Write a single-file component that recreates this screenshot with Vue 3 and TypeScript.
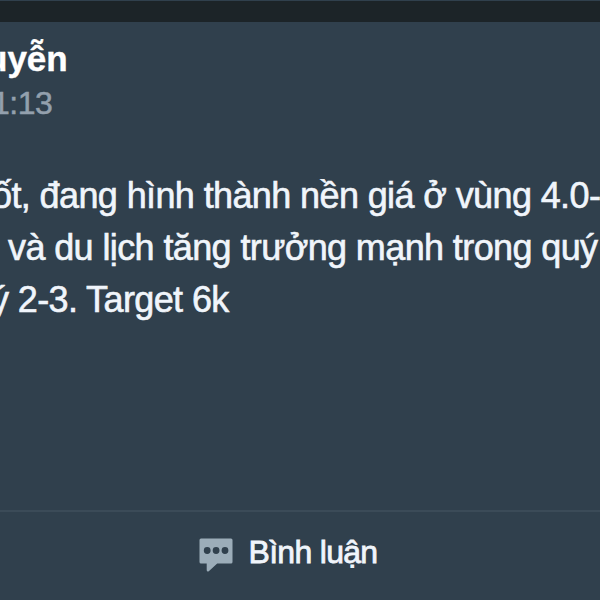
<template>
  <div class="feed">
    <article class="post">
      <header class="head">
        <div class="author">uyễn</div>
        <div class="time">1:13</div>
      </header>
      <div class="content">
        <p v-for="(line, i) in lines" :key="i" class="line" :class="`line-${i + 1}`">{{ line }}</p>
      </div>
      <footer class="actions">
        <button class="comment" type="button">
          <svg class="icon" viewBox="0 0 34 34" aria-hidden="true">
            <path
              fill-rule="evenodd"
              d="M2 .5h30a1.5 1.5 0 0 1 1.500 1.500v22a1.500 1.500 0 0 1-1.500 1.500H18.200L9.800 33.200q-1.800.9-2.100-1v-6.700H2A1.500 1.500 0 0 1 .5 24V2A1.500 1.500 0 0 1 2 .5ZM8.200 9.100a3.400 3.400 0 1 0 0 6.800 3.400 3.400 0 0 0 0-6.800Zm8.900 0a3.400 3.400 0 1 0 0 6.800 3.400 3.400 0 0 0 0-6.800Zm8.900 0a3.400 3.400 0 1 0 0 6.800 3.400 3.400 0 0 0 0-6.800Z"
            />
          </svg>
          <span class="label">Bình luận</span>
        </button>
      </footer>
    </article>
  </div>
</template>

<script setup lang="ts">
const lines: string[] = [
  'ốt, đang hình thành nền giá ở vùng 4.0-',
  'và du lịch tăng trưởng mạnh trong quý',
  'ý 2-3. Target 6k',
]
</script>

<style>
body {
  margin: 0;
  background: #30404d;
}
</style>

<style scoped>
.feed {
  width: 600px;
  height: 600px;
  box-sizing: border-box;
  overflow: hidden;
  border-top: 1px solid #30404d;
  background: #1c2428;
  font-family: 'Liberation Sans', Arial, sans-serif;
}

.post {
  display: flex;
  flex-direction: column;
  height: 578px;
  margin-top: 21px;
  background: #30404d;
}

.head {
  height: 148px;
  padding-top: 15px;
  box-sizing: border-box;
  white-space: nowrap;
}

.author {
  margin-left: -14px;
  color: #fff;
  font-size: 35px;
  font-weight: 700;
  line-height: 44px;
  -webkit-text-stroke: 0.4px #fff;
}

.time {
  margin-left: -8px;
  color: #93a0ad;
  font-size: 32px;
  line-height: 44px;
  letter-spacing: -0.5px;
  -webkit-text-stroke: 0.5px #93a0ad;
}

.content {
  flex: 1;
  color: #f0f5fb;
}

.line {
  margin: 0;
  font-size: 36px;
  line-height: 52px;
  letter-spacing: -0.61px;
  white-space: nowrap;
  -webkit-text-stroke: 0.6px #f0f5fb;
}

.line-1 {
  margin-left: -8px;
}

.line-2 {
  margin-left: 8px;
}

.line-3 {
  margin-left: -9px;
}

.actions {
  display: flex;
  justify-content: center;
  height: 90px;
  box-sizing: border-box;
  border-top: 2px solid #3b4b58;
}

.comment {
  display: flex;
  align-items: flex-start;
  gap: 16px;
  margin-right: 24px;
  padding: 26px 0 0;
  border: 0;
  background: none;
  color: #f0f5fb;
  font-family: inherit;
}

.icon {
  width: 34px;
  height: 34px;
  fill: #9cadb9;
}

.label {
  font-size: 32px;
  line-height: 36px;
  margin-top: -4px;
  letter-spacing: -0.7px;
  white-space: nowrap;
  -webkit-text-stroke: 0.8px #f0f5fb;
}
</style>
